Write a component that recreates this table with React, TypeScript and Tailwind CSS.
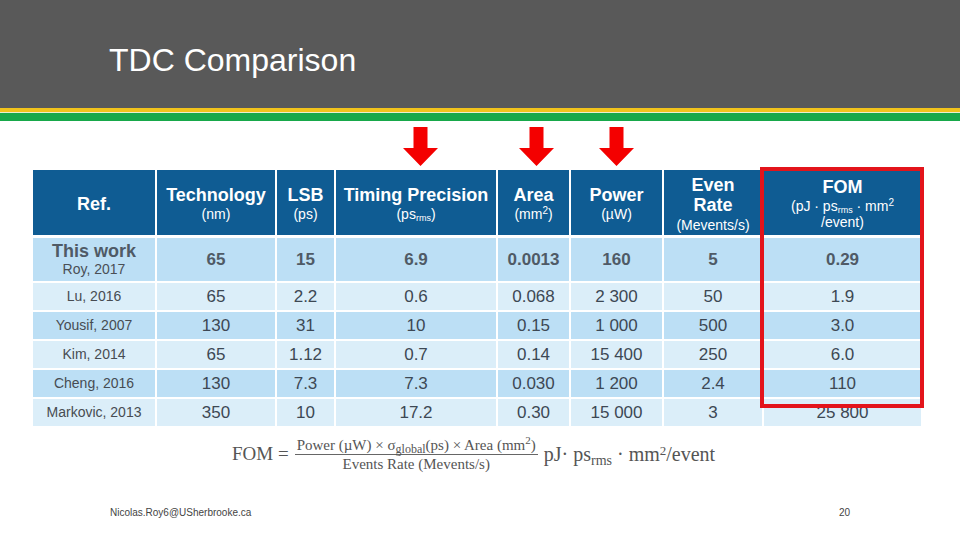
import React from "react";

const cols = "grid grid-cols-[122px_118px_57px_160px_71px_91px_98px_157px] gap-x-[2px]";

function Arrow() {
  return (
    <svg width="35" height="39" viewBox="0 0 35 39">
      <polygon points="10.5,0 24.5,0 24.5,21 35,21 17.5,39 0,21 10.5,21" fill="#f40000" />
    </svg>
  );
}

const Rms = () => <sub className="text-[9px]">rms</sub>;

type Row = [string, string, string, string, string, string, string, string];
const rows: Row[] = [
  ["Lu, 2016", "65", "2.2", "0.6", "0.068", "2 300", "50", "1.9"],
  ["Yousif, 2007", "130", "31", "10", "0.15", "1 000", "500", "3.0"],
  ["Kim, 2014", "65", "1.12", "0.7", "0.14", "15 400", "250", "6.0"],
  ["Cheng, 2016", "130", "7.3", "7.3", "0.030", "1 200", "2.4", "110"],
  ["Markovic, 2013", "350", "10", "17.2", "0.30", "15 000", "3", "25 800"],
];

function HeadCell({ title, sub, extra }: { title: React.ReactNode; sub?: React.ReactNode; extra?: string }) {
  return (
    <div className={"bg-[#0f5c93] text-white flex flex-col items-center justify-center text-center " + (extra ?? "")}>
      <div className="text-[18px] font-bold leading-[20px]">{title}</div>
      {sub && <div className="text-[14px] leading-[18px]">{sub}</div>}
    </div>
  );
}

export default function App() {
  return (
    <div className="w-[960px] h-[540px] overflow-hidden bg-white font-['Liberation_Sans',Arial,sans-serif]">
      {/* Title bar */}
      <div className="h-[108px] bg-[#595959] pl-[109px] pt-[44px]">
        <div className="text-[32px] leading-none text-white">TDC Comparison</div>
      </div>
      <div className="h-[4px] bg-[#f1c31c]" />
      <div className="h-[1px] bg-[#e9eecf]" />
      <div className="h-[8px] bg-[#17a84a]" />

      {/* Arrows */}
      <div className={cols + " ml-[33px] mt-[6px] h-[39px]"}>
        <div />
        <div />
        <div />
        <div className="flex justify-center pl-[8px]"><Arrow /></div>
        <div className="flex justify-center pl-[5px]"><Arrow /></div>
        <div className="flex justify-center"><Arrow /></div>
        <div />
        <div />
      </div>

      {/* Table */}
      <div className="relative ml-[33px] mt-[4px] w-[888px] flex flex-col gap-y-[2px]">
        <div className={cols + " h-[65px] mb-[1px]"}>
          <HeadCell title="Ref." extra="pt-[2px]" />
          <HeadCell title="Technology" sub="(nm)" extra="pt-[3px]" />
          <HeadCell title="LSB" sub="(ps)" extra="pt-[3px]" />
          <HeadCell title="Timing Precision" sub={<span>(ps<Rms />)</span>} extra="pt-[3px]" />
          <HeadCell title="Area" sub={<span>(mm<sup className="text-[10px]">2</sup>)</span>} extra="pt-[3px]" />
          <HeadCell title="Power" sub="(µW)" extra="pt-[3px]" />
          <div className="bg-[#0f5c93] text-white flex flex-col items-center justify-center text-center pt-[5px]">
            <div className="text-[18px] font-bold leading-[20px]">Even</div>
            <div className="text-[18px] font-bold leading-[20px]">Rate</div>
            <div className="text-[14px] leading-[20px]">(Mevents/s)</div>
          </div>
          <div className="bg-[#0f5c93] text-white flex flex-col items-center justify-center text-center pt-[2px]">
            <div className="text-[18px] font-bold leading-[20px]">FOM</div>
            <div className="text-[14px] leading-[18px]">
              (pJ · ps<Rms /> · mm<sup className="text-[10px]">2</sup>
            </div>
            <div className="text-[14px] leading-[15px]">/event)</div>
          </div>
        </div>

        {/* This work row */}
        <div className={cols + " h-[43px] text-[#4f5a66]"}>
          <div className="bg-[#bcdff5] flex flex-col items-center justify-center">
            <div className="text-[18px] font-bold leading-[18px]">This work</div>
            <div className="text-[14px] leading-[18px] text-[#4a4f55]">Roy, 2017</div>
          </div>
          {["65", "15", "6.9", "0.0013", "160", "5", "0.29"].map((v, i) => (
            <div key={i} className="bg-[#bcdff5] flex items-center justify-center text-[17px] font-bold">
              {v}
            </div>
          ))}
        </div>

        {rows.map((r, ri) => {
          const bg = ri % 2 === 0 ? "bg-[#dbeef9]" : "bg-[#bcdff5]";
          return (
            <div key={ri} className={cols + " h-[27px]"}>
              <div className={bg + " flex items-center justify-center text-[14px] text-[#474c52]"}>{r[0]}</div>
              {r.slice(1).map((v, i) => (
                <div key={i} className={bg + " flex items-center justify-center text-[17px] text-[#3d4854]"}>
                  {v}
                </div>
              ))}
            </div>
          );
        })}

        {/* highlight box */}
        <div className="absolute left-[727px] top-[-3px] w-[164px] h-[241px] border-[4px] border-[#e3141b]" />
      </div>

      {/* Formula */}
      <div className="mt-[8px] h-[40px] pl-[232px] flex items-center font-['Liberation_Serif',serif] text-[#555555]">
        <span className="text-[19px]">FOM =</span>
        <div className="ml-[6px] flex flex-col items-center">
          <div className="text-[15px] leading-[18px] px-[2px]">
            Power (µW) × σ<sub className="text-[12px]">global</sub>(ps) × Area (mm<sup className="text-[11px]">2</sup>)
          </div>
          <div className="w-full h-[1px] bg-[#666666]" />
          <div className="text-[15px] leading-[18px]">Events Rate (Mevents/s)</div>
        </div>
        <span className="ml-[6px] text-[20px]">
          pJ· ps<sub className="text-[14px]">rms</sub> · mm<sup className="text-[13px]">2</sup>/event
        </span>
      </div>

      {/* Footer */}
      <div className="mt-[33px] h-[12px] px-[110px] flex justify-between items-center text-[10px] leading-[12px] text-[#444444]">
        <span>Nicolas.Roy6@USherbrooke.ca</span>
        <span>20</span>
      </div>
    </div>
  );
}
